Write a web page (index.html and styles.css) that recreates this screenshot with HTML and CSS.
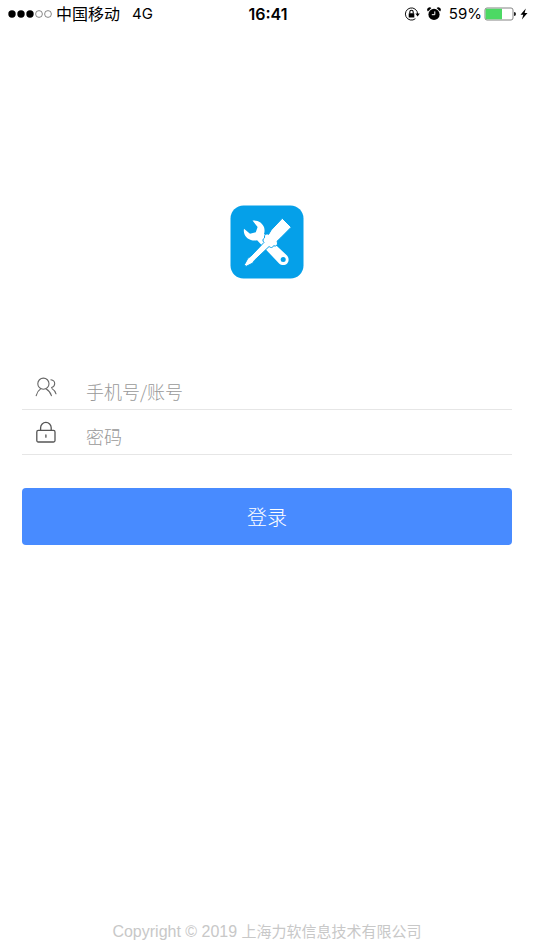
FILE: index.html
```html
<!DOCTYPE html>
<html lang="zh-CN">
<head>
<meta charset="utf-8">
<meta name="viewport" content="width=device-width, initial-scale=1">
<title>登录</title>
<link rel="stylesheet" href="styles.css">
</head>
<body>
<header class="status">
  <div class="status-left">
    <svg class="signal" viewBox="0 0 44 10" aria-hidden="true">
      <g fill="#000"><circle cx="4" cy="5" r="3.7"/><circle cx="13" cy="5" r="3.7"/><circle cx="22" cy="5" r="3.7"/></g>
      <g fill="none" stroke="#555" stroke-width=".7"><circle cx="31" cy="5" r="3.4"/><circle cx="40" cy="5" r="3.4"/></g>
    </svg>
    <span class="carrier">中国移动</span>
    <span class="network">4G</span>
  </div>
  <time class="clock">16:41</time>
  <div class="status-right">
    <svg class="rotation" viewBox="0 0 16 16" aria-hidden="true">
      <path d="M13.6 8A6.1 6.1 0 1 0 11.4 12.7" fill="none" stroke="#111" stroke-width="1"/>
      <path d="M11.4 7.6h4.4l-2.2 2.9z"/>
      <rect x="4.7" y="7.2" width="5.6" height="4.2" rx=".5"/>
      <path d="M5.8 7.5V6a1.7 1.7 0 0 1 3.4 0v1.5" fill="none" stroke="#000" stroke-width="1.1"/>
    </svg>
    <svg class="alarm" viewBox="0 0 14 14" aria-hidden="true">
      <circle cx="7" cy="7.4" r="5.6"/>
      <path d="M.9 4.4A2.2 2.2 0 0 1 4.4 1.1zM13.1 4.4A2.2 2.2 0 0 0 9.6 1.1z"/>
      <path d="M7.800 4.400V7.700H4.800" fill="none" stroke="#fff" stroke-width="1"/>
    </svg>
    <span>59%</span>
    <svg class="battery" viewBox="0 0 32 14" aria-hidden="true">
      <rect x="1" y="1" width="28" height="12" rx="2" fill="#fff" stroke="#777" stroke-width=".9"/>
      <path d="M2.6 1.7H18v10.6H2.6a1 1 0 0 1-1-1V2.7a1 1 0 0 1 1-1z" fill="#4cd964"/>
      <path d="M30 5a2 2 0 0 1 0 4z" fill="#222"/>
    </svg>
    <svg class="bolt" viewBox="0 0 8 12" aria-hidden="true"><path d="M5.8.4.5 6.7h2.8L1.9 11.6 7.5 5H4.6z"/></svg>
  </div>
</header>
<main class="login">
  <svg class="logo" viewBox="0 0 74 74" role="img" aria-label="应用标志">
    <rect x=".5" y=".5" width="73" height="73" rx="13" fill="#05a0e9"/>
    <path fill="#fff" d="M22.500 15.600c5.600-.6 10.300 2.600 11.700 7.200.5 2 .5 4.300-.2 6.200L57 50.600c2 2.300 2.200 5.600.2 7.800-2.200 2.300-5.800 2.200-8.100.1L27.100 35.200c-6.100 1.200-11.900-2.200-13-7.300-.3-1.300-.4-2.700-.1-4.200l6 5 5.800-1.400 1.800-5.400z"/>
    <circle cx="53.200" cy="54.600" r="2.500" fill="#05a0e9"/>
    <path fill="#fff" stroke="#05a0e9" stroke-width="1" d="M52.300 13.300 61.200 22.200 50.400 33.100 47 36.300c1.200 2.400.3 4.100-1.500 4.700l-2-.2c-.7 1.700-2.300 2.500-4.400.7L24.400 55.400l-1.700 2.700-6.600 3.300-1.700-1.700 3.600-6.600 2.500-1.500 13.500-14.200c-1.700-1.600-1.300-3.400.5-4.500l.1-2.400c1.200-1.500 2.700-1.800 4-1.100L41.200 25z"/>
  </svg>
  <form class="form">
    <div class="field">
      <label for="account" aria-label="手机号/账号">
        <svg class="field-icon" viewBox="0 0 24 24" aria-hidden="true">
          <g fill="none" stroke="#666" stroke-width="1.1" stroke-linecap="round">
            <circle cx="9.400" cy="8.700" r="5.600"/>
            <path d="M2.200 20.600c.7-3.100 2.100-5.200 4.400-6.700M12.200 13.900c2.600 1.500 4.400 3.800 5.200 6.700M16.900 4.800c2.300.3 3.800 1.900 3.800 4-.1 1.900-1.300 3.300-3.200 3.700M18 13.600c2 1.200 3.300 3 4 5.200"/>
          </g>
        </svg>
      </label>
      <input id="account" type="text" placeholder="手机号/账号" autocomplete="username">
    </div>
    <div class="field">
      <label for="password" aria-label="密码">
        <svg class="field-icon" viewBox="0 0 24 24" aria-hidden="true">
          <g fill="none" stroke="#555" stroke-width="1.300" stroke-linecap="round">
            <rect x="2.800" y="10.400" width="18.200" height="11.600" rx="1.500"/>
            <path d="M6.600 10.200V7.700a5.300 5.300 0 0 1 10.600 0v2.500M11.900 14.900v2.300"/>
          </g>
        </svg>
      </label>
      <input id="password" type="password" placeholder="密码" autocomplete="current-password">
    </div>
    <button class="submit" type="submit">登录</button>
  </form>
</main>
<footer class="copyright">Copyright © 2019 <span class="company">上海力软信息技术有限公司</span></footer>
</body>
</html>
```
FILE: styles.css
```css
* {
  box-sizing: border-box;
}

body {
  margin: 0;
  min-height: 100vh;
  display: flex;
  flex-direction: column;
  background: #fff;
  color: #000;
  font-family: Inter, "Noto Sans CJK SC", sans-serif;
}

svg {
  display: block;
  flex: none;
}

.status {
  display: grid;
  grid-template-columns: 1fr auto 1fr;
  align-items: center;
  height: 28px;
  padding: 0 6px 0 8px;
  font-size: 15px;
  line-height: 20px;
}

.status-left,
.status-right {
  display: flex;
  align-items: center;
}

.status-right {
  justify-content: flex-end;
}

.signal {
  width: 44px;
  height: 10px;
  margin-right: 4px;
}

.carrier {
  font-size: 16px;
}

.network {
  margin-left: 12px;
}

.clock {
  font-size: 16px;
  font-weight: 600;
}

.rotation {
  width: 16px;
  height: 16px;
  margin-right: 7px;
}

.alarm {
  width: 14px;
  height: 14px;
  margin-right: 8px;
}

.battery {
  width: 32px;
  height: 14px;
  margin: 0 4px 0 2px;
}

.bolt {
  width: 8px;
  height: 12px;
}

.login {
  flex: 1;
  display: flex;
  flex-direction: column;
  align-items: center;
  padding: 177px 22px 0;
}

.logo {
  width: 74px;
  height: 74px;
}

.form {
  width: 100%;
  margin-top: 86px;
}

.field {
  display: flex;
  align-items: center;
  height: 45px;
  padding-left: 12px;
  border-bottom: 1px solid #e6e6e6;
}

.field-icon {
  width: 24px;
  height: 24px;
}

.field input {
  flex: 1;
  min-width: 0;
  height: 44px;
  margin-left: 28px;
  padding: 8px 0 0;
  border: 0;
  outline: 0;
  background: none;
  color: #333;
  font-family: "Noto Sans CJK SC", sans-serif;
  font-weight: 300;
  font-size: 18px;
}

.field input::placeholder {
  color: #999;
}

.submit {
  display: block;
  width: 100%;
  height: 57px;
  margin-top: 33px;
  padding: 0;
  border: 0;
  border-radius: 4px;
  background: #488bff;
  color: #fff;
  font-family: "Noto Sans CJK SC", sans-serif;
  font-weight: 300;
  font-size: 20px;
}

.copyright {
  padding-bottom: 6px;
  color: #c8c8c8;
  text-align: center;
  font-family: "Liberation Sans", "Noto Sans CJK SC", sans-serif;
  font-size: 16px;
  line-height: 24px;
}

.company {
  font-size: 15px;
}
```
